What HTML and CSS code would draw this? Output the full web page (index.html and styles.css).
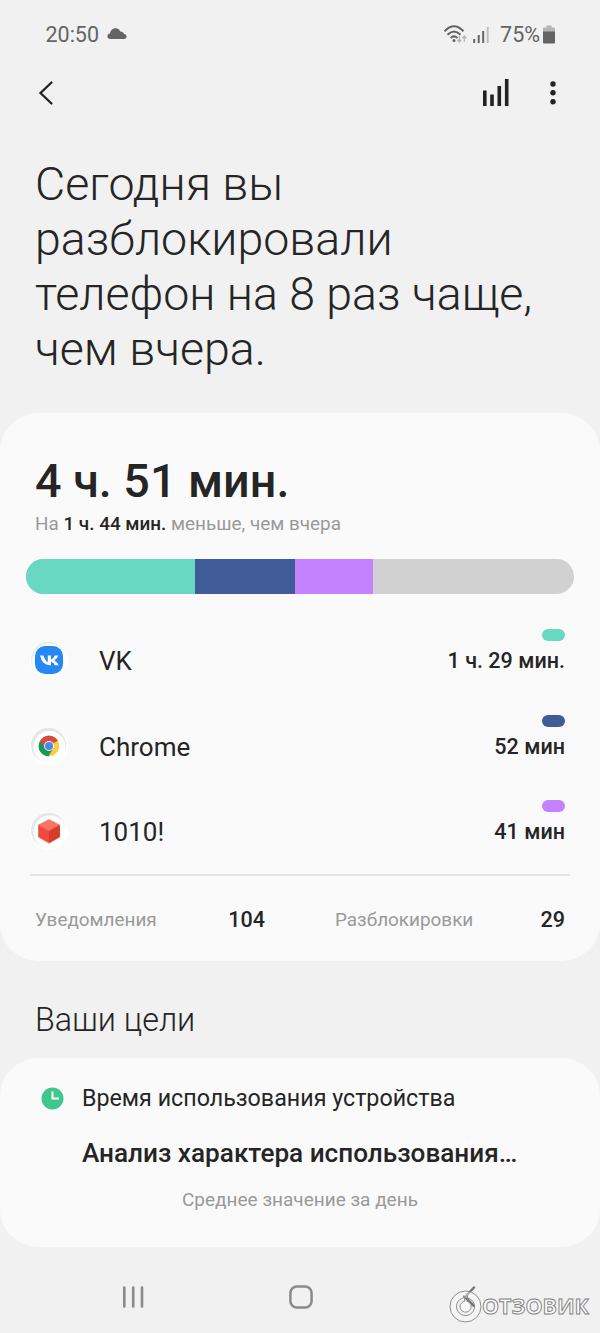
FILE: index.html
```html
<!DOCTYPE html>
<html lang="ru">
<head>
<meta charset="utf-8">
<title>Цифровое благополучие</title>
<link rel="stylesheet" href="styles.css">
</head>
<body>
<div class="screen">
  <div class="status">
    <span class="clock">20:50</span>
    <svg class="cloud" width="20" height="12" viewBox="0 0 20 12"><path d="M3.500 11C1.500 11 .4 9.900.4 8.200.4 6.700 1.500 5.700 3 5.500 3.400 2.500 5.500.2 8.500.2c2.200 0 3.800 1.200 4.700 3.200 2-.2 3.500.9 3.800 2.700 1.600.1 2.600 1.100 2.600 2.500 0 1.500-1 2.400-2.700 2.400z" fill="#646464"/></svg>
    <span class="grow"></span>
    <svg class="signals" width="48" height="20" viewBox="0 0 48 20" fill="none">
      <path d="M1.500 6.300Q11-3.700 20.500 6.300M4.500 9.700Q11 3.100 17.500 9.700M7.600 12.900Q11 9.800 14.400 12.900" stroke="#646464" stroke-width="2"/>
      <circle cx="11" cy="15.500" r="1.500" fill="#646464"/>
      <path d="M16.300 11v5.500M14.300 14.700l2 2.300 2-2.300M21.300 17v-5.500M19.300 13.300l2-2.300 2 2.300" stroke="#b4b4b4" stroke-width="1.300"/>
      <path d="M31.200 14v4M35.700 10V18M40.200 6V18" stroke="#646464" stroke-width="2"/>
      <path d="M44.700 2V18" stroke="#bdbdbd" stroke-width="2"/>
    </svg>
    <span class="percent">75%</span>
    <svg width="12" height="19" viewBox="0 0 12 19"><path d="M3.500.500h5v2H11a1 1 0 0 1 1 1V7H0V3.500a1 1 0 0 1 1-1h2.500z" fill="#b4b4b4"/><path d="M0 6.500h12v11a1 1 0 0 1-1 1H1a1 1 0 0 1-1-1z" fill="#646464"/></svg>
  </div>
  <div class="toolbar">
    <svg width="16" height="26" viewBox="0 0 16 26"><path d="M13.500 2.500 2.500 13 13.500 23.500" fill="none" stroke="#222" stroke-width="2.300" stroke-linecap="round"/></svg>
    <span class="grow"></span>
    <svg width="28" height="28" viewBox="0 0 28 28"><path d="M2.800 11.500V27M10 15.500V27M17.300 7V27M24.700 0V27" stroke="#222" stroke-width="3.600"/></svg>
    <svg class="more" width="8" height="26" viewBox="0 0 8 26" fill="#222"><circle cx="4" cy="4" r="2.700"/><circle cx="4" cy="12.800" r="2.700"/><circle cx="4" cy="21.700" r="2.700"/></svg>
  </div>
  <h1 class="headline">Сегодня вы<br>разблокировали<br>телефон на 8 раз чаще,<br>чем вчера.</h1>

  <section class="card usage">
    <div class="total">4 ч. 51 мин.</div>
    <div class="compare">На <b>1 ч. 44 мин.</b> меньше, чем вчера</div>
    <div class="bar"><i class="teal seg-vk"></i><i class="blue seg-chrome"></i><i class="violet seg-game"></i></div>
    <div class="app">
      <svg class="icon" width="40" height="40" viewBox="0 0 40 40"><circle cx="20" cy="20" r="19" fill="#fff"/><circle cx="19.600" cy="19.200" r="17.500" fill="#e7eaec"/><circle cx="20.500" cy="20.800" r="17.300" fill="#fff"/><rect x="6" y="6" width="28" height="28" rx="10" fill="#2787f5"/><path d="M11 15.500h3.500q1.500 5.200 4.300 6.700v-6.700H22v4q2.500-1 3.900-4h3.300q-1 3-3.800 5 3 1.800 4.200 4.700h-3.700q-1.100-2.500-3.900-3.400v3.400h-.9q-7.800.1-10.100-9.700z" fill="#fff"/></svg>
      <span class="name">VK</span>
      <span class="time"><i class="pill teal"></i>1 ч. 29 мин.</span>
    </div>
    <div class="app">
      <svg class="icon" width="40" height="40" viewBox="0 0 40 40"><circle cx="20" cy="20" r="19" fill="#fff"/><circle cx="19.600" cy="19.200" r="17.500" fill="#e6e6e6"/><circle cx="20.500" cy="21" r="16" fill="#fff"/><path d="M20 20 11.200 14.900A10.200 10.200 0 0 1 28.800 14.900z" fill="#d94a3f"/><path d="M20 20 11.200 14.900A10.200 10.200 0 0 0 20 30.200z" fill="#189a56"/><path d="M20 20 28.800 14.900A10.200 10.200 0 0 1 19.500 30.200z" fill="#fccd3f"/><path d="M20 15.100h8.900a10 10 0 0 0-17.700-.2l4.600 7.200z" fill="#d94a3f"/><path d="m15.700 22.300 4.300 2.500 4.200-2.500-4.700 7.900a10 10 0 0 1-8.300-15.300z" fill="#189a56"/><circle cx="20" cy="20" r="5" fill="#f4f4f4"/><circle cx="20" cy="20" r="4" fill="#4a86ee"/></svg>
      <span class="name">Chrome</span>
      <span class="time"><i class="pill blue"></i>52 мин</span>
    </div>
    <div class="app">
      <svg class="icon" width="40" height="40" viewBox="0 0 40 40"><circle cx="20" cy="20" r="19" fill="#fff"/><circle cx="19.600" cy="19.200" r="17.500" fill="#e4e8e5"/><circle cx="21" cy="21" r="16.500" fill="#fff"/><path d="m9.500 27 10.500-3 10.500 3L20 33.500z" fill="#fbd9cd"/><path d="m20 8.500 10.800 5.500v12L20 32 9.200 26V14z" fill="#ee4b3c"/><path d="m20 8.500 10.800 5.500L20 20 9.200 14z" fill="#f77467"/><path d="M30.800 14v12L20 32V20z" fill="#d83a2d"/></svg>
      <span class="name">1010!</span>
      <span class="time"><i class="pill violet"></i>41 мин</span>
    </div>
    <div class="stats">
      <span class="label">Уведомления</span><b class="count">104</b>
      <span class="label second">Разблокировки</span><b class="count">29</b>
    </div>
  </section>

  <h2 class="subhead">Ваши цели</h2>
  <section class="card goals">
    <div class="goal">
      <svg width="23" height="23" viewBox="0 0 23 23"><circle cx="11.500" cy="11.500" r="11" fill="#40c78e"/><path d="M11.500 4.500v7h6.500" fill="none" stroke="#fff" stroke-width="2"/></svg>
      <span class="goal-name">Время использования устройства</span>
    </div>
    <div class="analysis">Анализ характера использования…</div>
    <div class="average">Среднее значение за день</div>
  </section>

  <div class="nav">
    <svg width="22" height="24" viewBox="0 0 22 24"><path d="M2.300 2.500v19M11.200 2.500v19M20 2.500v19" stroke="#8a8a8a" stroke-width="2.600" stroke-linecap="round"/></svg>
    <svg class="home" width="24" height="24" viewBox="0 0 24 24"><rect x="1.400" y="1.400" width="21.200" height="21.200" rx="6.500" fill="none" stroke="#8a8a8a" stroke-width="2.500"/></svg>
    <svg class="back" width="14" height="24" viewBox="0 0 14 24"><path d="M12 2.500 3 12 12 21" fill="none" stroke="#777" stroke-width="2.500" stroke-linecap="round"/></svg>
    <svg class="watermark" width="146" height="42" viewBox="0 0 146 42">
      <circle cx="16.500" cy="22.500" r="12.250" fill="none" stroke="#fafafa" stroke-opacity=".45" stroke-width="6.500"/>
      <circle cx="16.500" cy="22.500" r="5.500" fill="#fafafa"/>
      <g fill="none" stroke="#808080" stroke-width=".9">
        <circle cx="16.500" cy="22.500" r="15.500"/>
        <path d="M14.500 11.500v2.300A9 9 0 1 0 18.500 13.800v-2.300"/>
        <path d="M15.700 12v5.200A5.500 5.500 0 1 0 17.500 17.200"/>
      </g>
      <text class="brand" x="33" y="30" textLength="107" lengthAdjust="spacingAndGlyphs">ОТЗОВИК</text>
    </svg>
  </div>
</div>
</body>
</html>
```
FILE: styles.css
```css
* { box-sizing: border-box; }
body { margin: 0; background: #f1f1f1; }
.screen {
  width: 600px; height: 1333px; overflow: hidden;
  display: flex; flex-direction: column;
  font-family: Roboto, "Noto Sans", sans-serif; color: #252525; white-space: nowrap;
}
.screen svg { display: block; flex: none; }
.grow { flex: 1; }
.status { height: 69px; display: flex; align-items: center; padding: 0 45px 0 45.500px; font-size: 21.500px; color: #646464; }
.cloud { margin: -2px 0 0 8px; }
.signals { margin-right: 9px; }
.percent { margin-right: 3px; }
.toolbar { height: 48px; display: flex; align-items: center; padding: 0 43px 0 38px; }
.more { margin-left: 39px; }
.headline { margin: 40px 0 0 35px; height: 256px; font-size: 46.500px; line-height: 55px; font-weight: 300; }
.card { background: #fafafa; border-radius: 38px; flex: none; }
.usage { height: 548px; padding: 39px 26px 0; }
.total { margin-left: 9px; height: 59px; line-height: 59px; font-size: 46.700px; font-weight: 500; }
.compare { margin-left: 9px; height: 26px; line-height: 26px; font-size: 18.900px; color: #999; }
b { font-weight: 500; color: #252525; }
.bar { display: flex; margin-top: 22px; height: 35px; border-radius: 18px; overflow: hidden; background: #d1d1d1; }
.teal { background: #68d8c2; }
.blue { background: #415b98; }
.violet { background: #c582ff; }
.seg-vk { width: 169px; }
.seg-chrome { width: 99.500px; }
.seg-game { width: 78.500px; }
.app { display: flex; height: 85.500px; padding: 0 9px 0 3px; }
.app .icon { margin-top: 46px; }
.name { flex: 1; margin: 52px 0 0 30px; font-size: 26px; line-height: 30px; }
.time { display: flex; flex-direction: column; align-items: flex-end; margin-top: 35px; font-size: 21.550px; line-height: 24px; font-weight: 500; }
.pill { width: 23.500px; height: 12px; border-radius: 6px; margin-bottom: 8px; }
.stats { display: flex; align-items: center; height: 88px; margin: 23.500px 4px 0; padding: 0 5px; border-top: 2px solid #e2e2e2; font-size: 18.900px; color: #999; }
.label { width: 121px; }
.label.second { margin-left: 70px; width: 137px; }
.count { width: 109px; text-align: right; font-size: 21.550px; }
.second + .count { width: 93px; }
.subhead { margin: 39px 0 0 35px; height: 58px; line-height: 40px; font-size: 32.300px; font-weight: 300; }
.goals { height: 189px; padding: 20px 35px 0 41px; }
.goal { display: flex; align-items: center; height: 40px; }
.goal-name { margin-left: 18px; font-size: 23.250px; }
.analysis { margin: 18px 0 0 41px; height: 34px; line-height: 34px; font-size: 26.150px; font-weight: 500; }
.average { margin: 17px 0 0 0; padding-right: 6px; line-height: 26px; font-size: 19px; color: #999; text-align: center; }
.nav { position: relative; flex: 1; display: flex; padding: 38px 0 0 122px; }
.home { margin-left: 145px; }
.back { margin-left: 149px; }
.watermark { position: absolute; left: 449px; top: 37px; }
.brand { font: 700 21px "Open Sans", sans-serif; fill: #fafafa; stroke: #808080; stroke-width: .9px; }
```
